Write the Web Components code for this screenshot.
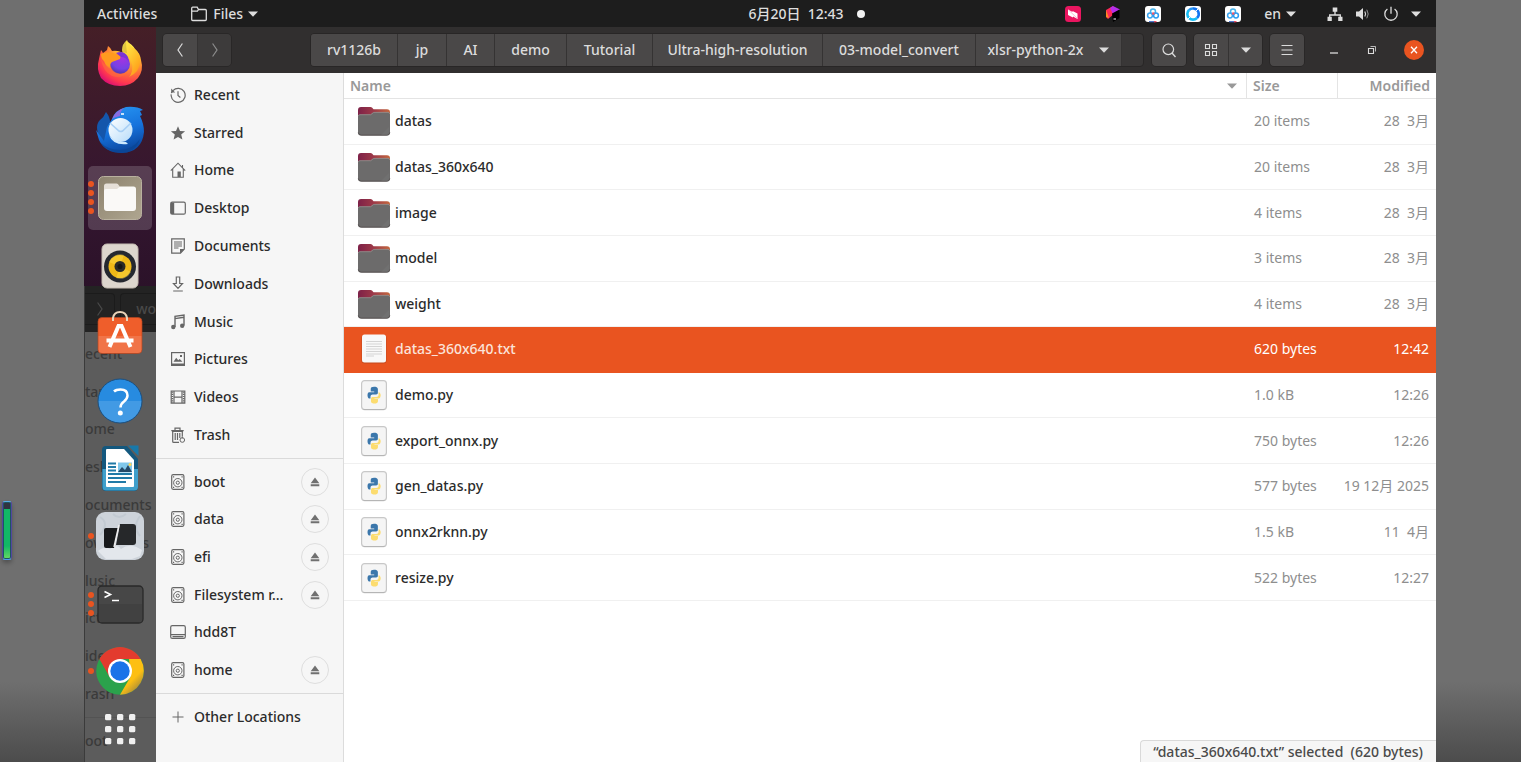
<!DOCTYPE html>
<html lang="en">
<head>
<meta charset="utf-8">
<title>Files</title>
<style>
html, body { margin: 0; height: 100%; }
body {
  font: 500 14px/20px "Noto Sans", "Noto Sans CJK SC", sans-serif;
  overflow: hidden;
}
</style>
</head>
<body>
<desk-screen>
  <top-bar></top-bar>
  <app-dock></app-dock>
  <files-window></files-window>
</desk-screen>

<script>
const define = (name, html, setup) => {
  const tpl = document.createElement('template');
  tpl.innerHTML = html;
  customElements.define(name, class extends HTMLElement {
    connectedCallback() {
      if (this.shadowRoot) return;
      const root = this.attachShadow({ mode: 'open' });
      root.append(tpl.content.cloneNode(true));
      if (setup) setup(this, root);
    }
  });
};

/* ---------- symbolic and full-colour icons ---------- */
const S = 'fill="none" stroke="currentColor"';
const ICONS = {
  recent: [16, 16, `<path ${S} stroke-width="1.2" d="M3 3.6A7 7 0 1 1 1.2 9"/><path ${S} stroke-width="1.2" stroke-dasharray="1.6 1.2" d="M1.2 9A7 7 0 0 1 3 3.4"/><path d="M1.2 1.6v4h4z" fill="currentColor"/><path ${S} stroke-width="1.2" d="M8 4.2v4.3l2.4 2"/>`],
  star: [16, 16, `<path fill="currentColor" d="M8 1.2l2 4.7 5.1.4-3.9 3.3 1.2 5L8 12l-4.4 2.6 1.2-5L.9 6.300l5.1-.4z"/>`],
  home: [16, 16, `<path ${S} stroke-width="1.1" d="M.8 8.600 8 1.200l7.200 7.400M2.700 7v8.300h10.600V7M12.500 3v2.500"/><path fill="currentColor" d="M7.500 9.500h3.300v5.500H7.500z"/>`],
  desktop: [16, 16, `<rect ${S} x=".7" y="2.200" width="14.600" height="12" rx="1.500" stroke-width="1.200"/><path fill="currentColor" d="M1 2.500h3.200v11.500H1z"/>`],
  documents: [16, 16, `<path ${S} stroke-width="1.200" d="M1.700.8h12.600v10.200L10.500 15.200H1.700z"/><path ${S} d="M4 4h8M4 6h8M4 8h8M4 10h4.500"/><path fill="currentColor" d="M10 11h4.500L10 15.500z"/>`],
  downloads: [16, 16, `<path ${S} stroke-width="1.200" d="M6.300 1h3.400v6.500h2.800L8 12.300 3.500 7.500h2.800zM3.200 15h9.600"/>`],
  music: [16, 16, `<path ${S} stroke-width="1.400" d="M5 13V2.400L14 1v10.500M5 4.600 14 3.200"/><circle cx="3.300" cy="13" r="2.200" fill="currentColor"/><circle cx="12.200" cy="11.700" r="2.200" fill="currentColor"/>`],
  pictures: [16, 16, `<rect ${S} x="1.600" y="1.600" width="12.800" height="12.800" stroke-width="1.200"/><path fill="currentColor" d="M1.600 12.500h12.800v2H1.600zM3.500 10.800l2.700-4 2 2.500L9.700 8l2.800 2.800zM10 4h2v2h-2z"/>`],
  videos: [16, 16, `<path ${S} stroke-width="1.200" d="M1.200 2h13.600v12.200H1.200zM4 2v12.200M12 2v12.200M4 8.100h8"/><path ${S} stroke-width="1.600" stroke-dasharray="1.200 1" d="M2.300 2.500v11.500M13.700 2.500v11.500"/>`],
  trash: [16, 16, `<path ${S} stroke-width="1.200" d="M1.300 3.600h12.400M5 3.500V1.200h5v2.300M2.700 4v10.400q0 1 1 1H9M12.300 4v5.500M5.200 6v7M7.500 6v7M9.800 6v5"/><path fill="currentColor" d="M2 3h11v2H2z"/><circle ${S} cx="12.300" cy="13" r="2.300"/><path ${S} d="M12.300 9.500v2"/>`],
  drive: [16, 16, `<rect ${S} x="1.700" y=".7" width="12.200" height="14.600" rx="1.500" stroke-width="1.200"/><circle ${S} cx="7.800" cy="8.700" r="4.200"/><circle ${S} cx="7.800" cy="8.700" r="1.600"/><path fill="currentColor" d="M3 2.300h1.200v1.200H3zM11.500 2.300h1.200v1.200h-1.200zM3 12.700h1.200v1.200H3zM11.500 12.700h1.200v1.200h-1.200z"/>`],
  disk: [16, 16, `<rect ${S} x=".7" y="1.700" width="14.600" height="12.600" rx="1.600" stroke-width="1.200"/><path ${S} stroke-width="1.200" d="M1 10.700h14M2.500 12.600h11"/>`],
  plus: [16, 16, `<path ${S} d="M8 2.500v11M2.500 8h11"/>`],
  eject: [10, 10, `<path fill="currentColor" d="M5 .5 9.300 6.200H.7zM.7 7.300h8.600v2H.7z"/>`],
  caret: [10, 6, `<path fill="currentColor" d="M0 .5h10L5 5.700z"/>`],
  back: [8, 16, `<path ${S} stroke-width="1.200" d="M6.400 1.500 2 8l4.400 6.500"/>`],
  forward: [8, 16, `<path ${S} stroke-width="1.200" d="M1.600 1.500 6 8l-4.400 6.500"/>`],
  search: [16, 16, `<circle ${S} cx="7.300" cy="7.300" r="5.300" stroke-width="1.200"/><path ${S} stroke-width="1.400" d="m11 11 3.500 4"/>`],
  grid: [14, 14, `<path ${S} stroke-width="1.100" d="M1.500 1.500h4v4h-4zM8.500 1.500h4v4h-4zM1.500 8.500h4v4h-4zM8.500 8.500h4v4h-4z"/>`],
  menu: [12, 12, `<path ${S} stroke-width="1.200" d="M.5 1.500h11M.5 6h11M.5 10.500h11"/>`],
  minimize: [10, 10, `<path ${S} stroke-width="1.300" d="M1 8h8"/>`],
  restore: [10, 10, `<path ${S} stroke-width="1.100" d="M1.500 3.500h5v5h-5z"/><path ${S} opacity=".8" d="M3.500 1.500h5v5"/>`],
  close: [8, 8, `<path ${S} stroke-width="1.300" d="m1 .8 6 6.400M7 .8 1 7.200"/>`],
  folderline: [18, 16, `<path ${S} stroke-width="1.300" d="M1.700 3V2.200q0-1 1-1h4.500l1.300 2.300h6.800q1 0 1 1v9q0 1-1 1H2.700q-1 0-1-1zM1.700 5.200h5.700l1.200-1.700"/>`],
  network: [16, 16, `<path ${S} stroke-width="1.300" d="M8 5v4M2.700 12V9h10.600v3"/><path fill="currentColor" d="M5.700 1.500h4.600v4.300H5.700zM.5 10.800h4.300v4.200H.5zM11.200 10.800h4.300v4.200h-4.300z"/>`],
  volume: [16, 16, `<path fill="currentColor" d="M1 5.500h3L8 2v12l-4-3.500H1z"/><path ${S} stroke-width="1.200" d="M9.800 5.500q1.600 2.500 0 5"/><path ${S} opacity=".6" d="M11.800 3.700q2.800 4.300 0 8.600"/>`],
  power: [16, 16, `<path ${S} stroke-width="1.300" d="M4.400 3A6.200 6.200 0 1 0 11.600 3M8 .8v7"/>`],
  anydesk: [18, 18, `<rect x="1" y="1" width="16" height="16" rx="3.500" fill="#ea1660"/><path fill="#fff" d="M4 4.500 8.500 7V6l5 2.500V14L9 11.500v1L4 10z"/><path d="m4.500 5 9 8.500" stroke="#f7a9c5" stroke-width=".8"/>`],
  toolbox: [18, 18, `<path fill="#fe2857" d="M2 5 9 1l1 8-6 5-2-2z"/><path fill="#fd8a22" d="m2 5 3 8-3-1z"/><path fill="#b62dea" d="m9 1 7 3.500L9 9 6 3z"/><path fill="#000" d="M8 8.500 15.500 4.500v8.500L9 17z"/><path fill="#fff" d="M9.500 13.500h2.500v1H9.500z"/>`],
  clips: [18, 18, `<rect x="1" y="1" width="16" height="16" rx="3" fill="#fff"/><g fill="none" stroke-width="1.500"><circle cx="9" cy="6.400" r="2.500" stroke="#45b3ec"/><circle cx="6" cy="10.500" r="2.400" stroke="#3ba6f2"/><circle cx="12" cy="10.500" r="2.400" stroke="#2b9bf2"/></g><circle cx="9.200" cy="8.500" r="1.300" fill="#f0566b"/><path stroke="#3b66c4" stroke-width="1.200" d="M5 16.700h6"/><path stroke="#ef4056" stroke-width="1.200" d="M10 16.700h2.500"/>`],
  ring: [18, 18, `<rect x="1" y="1" width="16" height="16" rx="3" fill="#fff"/><g fill="none" stroke-width="2.600"><path stroke="#1274f2" d="M9 3.500a5.500 5.500 0 0 1 4 9.500"/><path stroke="#16bdf5" d="M13 13a5.500 5.500 0 0 1-8-8"/><path stroke="#2596f6" d="M5 5.200a5.500 5.500 0 0 1 4-1.700"/></g><path d="m3 15 3-3M12 6l3-3" stroke="#fff"/>`],
  folder: [34, 32, `<defs><linearGradient id="a"><stop offset="0" stop-color="#7d2148"/><stop offset=".5" stop-color="#9e3a48"/><stop offset="1" stop-color="#c4693f"/></linearGradient></defs><path fill="url(#a)" d="M1 5q0-3 3-3h9.500q1.500 0 3 2.200H30q3 0 3 3V15H1z"/><path d="M1 11q0-1.500 2-1.500h10.500l3-2.300H31q2 0 2 2v18.300q0 3-3 3H4q-3 0-3-3z" fill="#6c6b6b"/><path d="M1.300 10.800Q1.500 9.700 3 9.700h10.700l3-2.300H31q1.500 0 1.700 1.500" fill="none" stroke="#97908f" stroke-width=".8"/><path d="M1.300 27.500q.2 2.700 3 2.700h25.500q2.700 0 3-2.700" fill="none" stroke="#4c4747" stroke-width=".8"/><path d="m32 22-8 8h6q2 0 2-2z" fill="#777" opacity=".4"/>`],
  text: [34, 32, `<rect x="4.500" y="2" width="25" height="28.500" rx="3" fill="#b4441c" opacity=".7"/><rect x="5" y="1.500" width="24" height="28" rx="2.500" fill="#f8f8f8"/><path d="M9 8.500h8M9 11h8M9 13.500h8M9 16h8M9 18.500h8M9 21h8M9 23h8M17 8.500h8M17 11h8M17 13.500h8M17 16h8M17 18.500h8M17 21h8" stroke="#d4d4d4"/>`],
  python: [34, 32, `<rect x="4.600" y="1.600" width="24.800" height="29" rx="3" fill="#f5f5f5" stroke="#c8c8c8" stroke-width="1.200"/><path d="M6.500 30.500h21" stroke="#b5b5b5"/><g transform="translate(3.300 2) scale(.87)"><path fill="#3b77ab" d="M15.800 6.500c-2.700 0-3.800 1-3.800 2.600v3h4v.7h-5.700C8.600 12.800 8.300 15 8.300 16.500s.5 3.700 2 3.700h1.400V18c0-1.600 1.300-2.400 2.500-2.400h4c1.300 0 2-1 2-2V9.100c0-2-2-2.600-4.400-2.600z"/><path fill="#fcdc6f" d="M21 12.800v3c0 1.700-1.200 2.600-2.500 2.600h-4c-1.300 0-2.200.8-2.200 2v3.200c0 1.600 2 2.400 4 2.400 2.300 0 4-.8 4-2.600v-2.600h-4v-.6H21c1.500 0 2.400-1.600 2.400-3.700S22.500 12.800 21 12.800z"/></g>`],
  firefox: [48, 48, `<defs><radialGradient id="a" cx=".75" cy=".12" r="1"><stop offset="0" stop-color="#fff44f"/><stop offset=".35" stop-color="#ffb52e"/><stop offset=".6" stop-color="#ff7139"/><stop offset=".82" stop-color="#ff3750"/><stop offset="1" stop-color="#d60a78"/></radialGradient><radialGradient id="b" cx=".6" cy=".2" r=".9"><stop offset="0" stop-color="#a832e0"/><stop offset=".6" stop-color="#7542e5"/><stop offset="1" stop-color="#4a3099"/></radialGradient><linearGradient id="c" y2="1"><stop offset="0" stop-color="#fff44f"/><stop offset="1" stop-color="#ff980e"/></linearGradient></defs><path fill="url(#a)" d="M5 11q1 1 2 3l4-3 1-4q3 2 4 5 4-1 9 1l6 1q-1-7-1-12 6 3 9 8 5 4 6 11 3 10-3 18-7 8-18 8-12 0-19-8-5-9-2-19 1-5 2-9z"/><path fill="url(#c)" d="M31 1q-5 4-5 10 0 3 4 5 8 6 6 16-1 4-3 6 11-5 11-16 0-7-5-12-6-4-8-9z" opacity=".85"/><circle cx="24" cy="25" r="10" fill="url(#b)"/><path fill="#ff9a1f" d="M5 15q5-3 12-1l8 2-1 4-8 3q-3 2-1 7-5-2-7-8-3-2-3-7z"/><path fill="#ff7139" d="M5 20q4 8 10 8 4 9 16 6-6 6-15 3Q7 33 5 20z" opacity=".5"/><path fill="#7b35d5" d="M20 14q8-3 12 4l1 5q-3-5-8-5z"/>`],
  thunderbird: [48, 48, `<defs><linearGradient id="a" x2=".3" y2="1"><stop offset="0" stop-color="#299af5"/><stop offset=".6" stop-color="#1672dc"/><stop offset="1" stop-color="#0b4ba5"/></linearGradient><linearGradient id="b" y2="1"><stop offset="0" stop-color="#fff"/><stop offset="1" stop-color="#b7dcfa"/></linearGradient></defs><path fill="#1456ab" d="M10 6q4 5 4 10l-3 22-7-6Q-2 20 4 14q4-3 6-8z"/><path fill="url(#a)" d="M16 13q3-9 14-12 11-1 17 3l-3 1 2 4-2 1q4 8 4 16-2 20-22 21Q9 47 3 34L0 24l8 11 3-14z"/><path fill="#8a6be0" d="M16 13q3-8 12-11-4 3-4 8-5 1-8 3z"/><path fill="#0a438d" opacity=".6" d="M4 36q8 8 20 8t20-11Q39 47 26 47 11 47 4 36z"/><circle cx="24.500" cy="24" r="12" fill="url(#b)"/><path d="m14 17 9 8q2 1 3.500 0l8.500-8" fill="none" stroke="#a7cff5" stroke-width="1.600"/><path fill="#cce9ff" d="M13 29q7 8 17 7l2 2Q17 40 13 29z"/><path d="M25 8h3" stroke="#fff" stroke-width="1.500"/>`],
  files: [48, 48, `<defs><linearGradient id="a" x2="1" y2="1"><stop offset="0" stop-color="#8c826e"/><stop offset="1" stop-color="#afa690"/></linearGradient></defs><rect x="2.500" y="2.500" width="43" height="43" rx="5" fill="url(#a)" stroke="#b9b19f"/><path fill="#e6e0d8" d="M8 12q0-2.500 2.500-2.500h10q1.500 0 2.500 2l1 1.500h6V20H8z"/><path fill="#faf9f7" d="M8 17q0-2 2-2h11l3-2.500h13.500q2.500 0 2.500 2.500v19q0 3-3 3H11q-3 0-3-3z"/>`],
  rhythm: [48, 48, `<rect x="6" y="2" width="36" height="44" rx="5" fill="#ddd6ce" stroke="#c5bcb2"/><circle cx="24" cy="24.500" r="16" fill="#252830"/><circle cx="24" cy="24.500" r="11.500" fill="#efb817"/><path d="M24 24.500 13 20a12 12 0 0 1 15-7zM24 24.500 35 30a12 12 0 0 1-15 6z" fill="#ffdc4a" opacity=".45"/><circle cx="24" cy="24.500" r="5.500" fill="#2a2a27"/><circle cx="24" cy="24.500" r="2.500" fill="#151515"/>`],
  software: [48, 48, `<rect x="2" y="8.500" width="44" height="36" rx="4" fill="#ef5e2b" stroke="#b34521" stroke-width=".7"/><path fill="#fff" opacity=".14" d="M2.500 27h43v14q0 3-3.500 3H6q-3.500 0-3.500-3z"/><path d="M17 12V9q1-6 7-6t7 6v3" fill="none" stroke="#e9d3b9" stroke-width="2"/><path d="M13.500 38 22.500 17h3l9 21M10.500 31.500h27" fill="none" stroke="#fff" stroke-width="4"/>`],
  help: [48, 48, `<circle cx="24" cy="24" r="22" fill="#278be0" stroke="#1a4f80"/><path fill="#fff" opacity=".13" d="M2.500 24h43a21.500 21.500 0 0 1-43 0z"/><path d="M18 14.500q2-2 6.500-2 7 0 7 6 0 3-3.500 6-3.500 2.500-3.500 6" fill="none" stroke="#fff" stroke-width="2.500"/><circle cx="24.300" cy="36" r="2.500" fill="#fff"/>`],
  writer: [48, 48, `<path d="M10 2h21l11 13v28q0 4-4 4H10q-4 0-4-4V6q0-4 4-4z" fill="#14587e"/><path d="M6.500 25H42v18q0 3.500-4 3.500H10q-3.500 0-3.500-3.500z" fill="#3f9fcb"/><path d="M32 1.500h10.500V12z" fill="#1878a9"/><path d="M11 5h17l10 11v26q0 1-1 1H11q-1 0-1-1V6q0-1 1-1z" fill="#fff"/><path d="M12 19.500h8M12 23h8M12 26.500h8M12 30h24M12 34h24M12 38h18" stroke="#217aa7" stroke-width="1.800"/><path fill="#80c7ea" d="M22 18.500h14v10H22z"/><path fill="#254967" d="m22 28 4-5 3 3 3-5 4 7z"/><circle cx="34" cy="20.500" r="1.500" fill="#ffd451"/>`],
  deskflow: [48, 48, `<rect x="0" y="0" width="48" height="48" rx="9" fill="#cdd3da"/><path d="M2 39q7-6 12-2 7-6 11 0 9-7 21 1l-2 6-8 3H10z" fill="#e3e7ec"/><path d="M4 5q10 6 0 18M44 4q-8 11 0 20M17 2q6 6 13 0" fill="none" stroke="#c2cad2" stroke-width="2"/><path fill="#181a1c" d="M10 16h12l-4 20h-8q-2 0-2-2V18q0-2 2-2z"/><path fill="#26282a" d="M24 12h13q3 0 3 3v15q0 3-3 3H20z"/><path d="m23 13-5 22" stroke="#eee" stroke-width="1.500"/>`],
  terminal: [48, 48, `<rect x="2" y="6" width="45" height="37" rx="4" fill="#474747" stroke="#292929" stroke-width="1.300"/><path fill="#414141" d="M3 24h43v15q0 3-3 3H6q-3 0-3-3z"/><path d="m8.500 11.500 6 3-6 3M16 20.500h7" fill="none" stroke="#fff" stroke-width="1.600"/>`],
  chrome: [48, 48, `<defs><linearGradient id="f" y2="1"><stop offset=".72" stop-color="#5c5c5c" stop-opacity="0"/><stop offset="1" stop-color="#5c5c5c" stop-opacity=".9"/></linearGradient></defs><circle cx="24" cy="24" r="23.800" fill="#2ba24c"/><path fill="#e33b2e" d="M3.400 12a23.800 23.800 0 0 1 41.200 0H24L13.600 30z"/><path fill="#fdbf13" d="M44.600 12A23.800 23.800 0 0 1 24 47.800L34.400 30 33 12z"/><circle cx="24" cy="24" r="12" fill="#fff"/><circle cx="24" cy="24" r="9.700" fill="#1a73e8"/><circle cx="24" cy="24" r="24" fill="url(#f)"/>`],
  apps: [32, 32, `<g fill="#f0f0f0"><rect x="1" y="1" width="6.300" height="6.300" rx="1.500"/><rect x="13" y="1" width="6.300" height="6.300" rx="1.500"/><rect x="25" y="1" width="6.300" height="6.300" rx="1.500"/><rect x="1" y="13" width="6.300" height="6.300" rx="1.500"/><rect x="13" y="13" width="6.300" height="6.300" rx="1.500"/><rect x="25" y="13" width="6.300" height="6.300" rx="1.500"/><rect x="1" y="25" width="6.300" height="6.300" rx="1.500"/><rect x="13" y="25" width="6.300" height="6.300" rx="1.500"/><rect x="25" y="25" width="6.300" height="6.300" rx="1.500"/></g>`]
};

define('ui-icon', `<style>:host{display:inline-flex;flex:none}svg{display:block}</style>`, (el, root) => {
  const [w, h, body] = ICONS[el.getAttribute('name')];
  const box = document.createElement('div');
  box.innerHTML = `<svg xmlns="http://www.w3.org/2000/svg" width="${w}" height="${h}" viewBox="0 0 ${w} ${h}" aria-hidden="true">${body}</svg>`;
  root.append(box.firstChild);
});

/* ---------- screen: side bezels, panel, dock and window ---------- */
define('desk-screen', `
<style>
:host {
  display: grid; position: relative; box-sizing: border-box; height: 100vh;
  grid-template: 27px minmax(0, 1fr) / 72px minmax(0, 1fr);
  padding: 0 85px 0 84px; overflow: hidden;
  background: linear-gradient(#6f6f6f calc(100% - 80px), #4c4c4c);
}
::slotted(top-bar) { grid-column: 1 / 3; }
.meter {
  position: absolute; left: 2px; top: 501px; box-sizing: border-box; width: 10px; height: 59px;
  border: 1px solid #5148a0; border-top-color: #58aee8; border-bottom-color: #4b9bea;
  border-radius: 3px; background: linear-gradient(#303440 7px, #12b866 7px 44px, #68db62);
  box-shadow: 0 3px 4px #0004, inset 0 0 0 1px #1e555f;
}
</style>
<slot></slot><div class="meter"></div>`);

define('top-bar', `
<style>
:host { display: grid; grid-template-columns: 49% auto 1fr; align-items: center; background: #1d1d1d; color: #dedede; }
div { display: flex; align-items: center; }
button { all: unset; display: flex; align-items: center; }
.left { padding-left: 13px; gap: 33px; }
.files { gap: 5px; }
.clock { gap: 13px; padding-left: 2px; white-space: pre; padding-top: 1px; }
.dot { width: 8px; height: 8px; border-radius: 50%; background: #f2f2f2; }
.right { justify-content: flex-end; padding-right: 15px; }
.tray { gap: 22px; margin-right: 22px; }
.lang { gap: 5px; margin-right: 31px; }
.system { gap: 12px; }
</style>
<div class="left"><button>Activities</button><button class="files"><ui-icon name="folderline"></ui-icon>Files <ui-icon name="caret"></ui-icon></button></div>
<button class="clock"><span>6月20日  12:43</span><span class="dot"></span></button>
<div class="right">
  <div class="tray"><ui-icon name="anydesk"></ui-icon><ui-icon name="toolbox"></ui-icon><ui-icon name="clips"></ui-icon><ui-icon name="ring"></ui-icon><ui-icon name="clips"></ui-icon></div>
  <button class="lang">en <ui-icon name="caret"></ui-icon></button>
  <button class="system" aria-label="System menu"><ui-icon name="network"></ui-icon><ui-icon name="volume"></ui-icon><ui-icon name="power"></ui-icon><ui-icon name="caret"></ui-icon></button>
</div>`);

/* ---------- dock ---------- */
define('dock-item', `
<style>
:host { display: grid; place-items: center; position: relative; }
button { all: unset; display: grid; place-items: center; width: 64px; height: 64px; border-radius: 5px; }
:host([active]) button { background: #ffffff2b; }
.dots { position: absolute; left: 4px; top: 0; bottom: 0; display: flex; flex-direction: column; justify-content: center; gap: 3px; }
.dots i { width: 6px; height: 6px; border-radius: 50%; background: #e95420; }
</style>
<button><slot></slot></button><div class="dots"></div>`, (el, root) => {
  root.querySelector('button').setAttribute('aria-label', el.getAttribute('label'));
  root.querySelector('.dots').innerHTML = '<i></i>'.repeat(+el.getAttribute('windows') || 0);
});

const PLACES = [['recent', 'Recent'], ['star', 'Starred'], ['home', 'Home'], ['desktop', 'Desktop'], ['documents', 'Documents'], ['downloads', 'Downloads'], ['music', 'Music'], ['pictures', 'Pictures'], ['videos', 'Videos'], ['trash', 'Trash']];

define('app-dock', `
<style>
:host { display: flex; flex-direction: column; position: relative; overflow: hidden; background: linear-gradient(#451f27, #351630 160px, #2b1229 260px); }
.behind { position: absolute; inset: 259px 0 0; border-left: 1px solid #3b3b3b; background: #5c5c5c; color: #3a3a3a; }
.bar { height: 46px; display: flex; align-items: center; background: #232323; color: #494949; }
.bar span { flex: none; box-sizing: border-box; height: 32px; display: flex; align-items: center; border: 1px solid #1b1b1b; }
.bar .fwd { width: 30px; justify-content: center; border-left: 0; border-radius: 0 4px 4px 0; }
.bar .path { flex: 1; margin-left: 5px; justify-content: flex-end; border-right: 0; border-radius: 4px 0 0 4px; }
ul { list-style: none; margin: 0; padding: 3px 0 4px; height: 378px; display: grid; grid-auto-rows: 1fr; align-items: center; border-bottom: 1px solid #535353; }
li { white-space: nowrap; }
.last { height: 38px; margin-top: 4px; line-height: 38px; }
.items { position: relative; display: grid; grid-auto-rows: 1fr; height: 676px; padding-top: 2px; flex: none; }
.apps { all: unset; position: relative; display: grid; place-items: center; height: 48px; }
</style>
<div class="behind">
  <div class="bar"><span class="fwd"><ui-icon name="forward"></ui-icon></span><span class="path">wo</span></div>
  <ul><li>ecent</li><li>tarred</li><li>ome</li><li>esktop</li><li>ocuments</li><li>ownloads</li><li>lusic</li><li>ictures</li><li>ideos</li><li>rash</li></ul>
  <div class="last">oot</div>
</div>
<div class="items">
  <dock-item label="Firefox"><ui-icon name="firefox"></ui-icon></dock-item>
  <dock-item label="Thunderbird"><ui-icon name="thunderbird"></ui-icon></dock-item>
  <dock-item label="Files" active windows="4"><ui-icon name="files"></ui-icon></dock-item>
  <dock-item label="Rhythmbox"><ui-icon name="rhythm"></ui-icon></dock-item>
  <dock-item label="Ubuntu Software"><ui-icon name="software"></ui-icon></dock-item>
  <dock-item label="Help"><ui-icon name="help"></ui-icon></dock-item>
  <dock-item label="LibreOffice Writer"><ui-icon name="writer"></ui-icon></dock-item>
  <dock-item label="Deskflow" windows="1"><ui-icon name="deskflow"></ui-icon></dock-item>
  <dock-item label="Terminal" windows="3"><ui-icon name="terminal"></ui-icon></dock-item>
  <dock-item label="Chrome" windows="1"><ui-icon name="chrome"></ui-icon></dock-item>
</div>
<button class="apps" aria-label="Show applications"><ui-icon name="apps"></ui-icon></button>`);

/* ---------- file manager window ---------- */
define('files-window', `
<style>
:host { display: grid; grid-template: 46px minmax(0, 1fr) / 188px minmax(0, 1fr); background: #fff; position: relative; }
header-bar { grid-column: 1 / 3; }
output { position: absolute; right: 0; bottom: 0; box-sizing: border-box; height: 22px; padding: 0 13px 0 12px; border: 1px solid #d9d9d9; border-width: 1px 0 0 1px; border-radius: 4px 0 0; background: #f6f6f6; color: #4a4a4a; line-height: 22px; white-space: pre; }
</style>
<header-bar></header-bar><side-bar></side-bar><file-list></file-list>
<output>“datas_360x640.txt” selected  (620 bytes)</output>`);

define('header-bar', `
<style>
:host { display: flex; align-items: center; padding: 0 12px 0 6px; background: #312f2f; color: #dcdcdc; box-sizing: border-box; }
button { all: unset; box-sizing: border-box; display: flex; align-items: center; justify-content: center; height: 32px; background: #4a4848; white-space: nowrap; }
.group { display: flex; border: 1px solid #292727; border-radius: 5px; overflow: hidden; height: 32px; flex: none; }
.group button { width: 34px; }
.group button + button { border-left: 1px solid #353333; }
.group .off { background: #3d3b3b; color: #8c8c8c; }
nav { flex: 1; min-width: 0; margin: 0 7px 0 78px; display: grid; grid-template-columns: 87px 49px 48px 72px 86px 170px 153px 146px 1fr; border: 1px solid #282626; border-radius: 4px; background: #393737; overflow: hidden; }
nav button { border-right: 1px solid #353333; gap: 16px; }
.search, .view { margin-right: 6px; }
.controls { flex: none; width: 95px; display: flex; justify-content: space-between; align-items: center; margin-left: 24px; }
.controls button { background: none; width: 10px; }
.controls .close { width: 20px; height: 20px; border-radius: 50%; background: #e95420; color: #fff; }
</style>
<div class="group"><button aria-label="Back"><ui-icon name="back"></ui-icon></button><button class="off" aria-label="Forward"><ui-icon name="forward"></ui-icon></button></div>
<nav><button>rv1126b</button><button>jp</button><button>AI</button><button>demo</button><button>Tutorial</button><button>Ultra-high-resolution</button><button>03-model_convert</button><button>xlsr-python-2x <ui-icon name="caret"></ui-icon></button></nav>
<div class="group search"><button aria-label="Search"><ui-icon name="search"></ui-icon></button></div>
<div class="group view"><button aria-label="Icon view"><ui-icon name="grid"></ui-icon></button><button aria-label="View options"><ui-icon name="caret"></ui-icon></button></div>
<div class="group"><button aria-label="Menu"><ui-icon name="menu"></ui-icon></button></div>
<div class="controls"><button aria-label="Minimize"><ui-icon name="minimize"></ui-icon></button><button aria-label="Restore"><ui-icon name="restore"></ui-icon></button><button class="close" aria-label="Close"><ui-icon name="close"></ui-icon></button></div>`);

define('side-item', `
<style>
:host { display: flex; align-items: center; padding: 0 14px; }
a { flex: 1; min-width: 0; display: flex; align-items: center; gap: 8px; color: inherit; text-decoration: none; }
ui-icon { color: #666; }
span { flex: none; white-space: nowrap; }
button { all: unset; box-sizing: border-box; width: 28px; height: 28px; flex: none; display: grid; place-items: center; border: 1px solid #dedede; border-radius: 50%; }
button ui-icon { color: #707070; }
</style>
<a href="#"><span><slot></slot></span></a>`, (el, root) => {
  const icon = document.createElement('ui-icon');
  icon.setAttribute('name', el.getAttribute('icon'));
  root.querySelector('a').prepend(icon);
  if (el.hasAttribute('eject')) {
    root.querySelector('a').insertAdjacentHTML('afterend', '<button aria-label="Eject"><ui-icon name="eject"></ui-icon></button>');
  }
});

define('side-bar', `
<style>
:host { display: block; background: #f6f6f6; border-right: 1px solid #dcdcdc; color: #2b2b2b; padding-top: 3px; overflow: hidden; }
div { display: grid; grid-auto-rows: 1fr; }
.places { height: 378px; }
.drives { height: 226px; }
hr { margin: 4px 0; border: 0; border-top: 1px solid #dadada; }
.other { height: 38px; }
</style>
<div class="places"></div><hr>
<div class="drives">
  <side-item icon="drive" eject>boot</side-item><side-item icon="drive" eject>data</side-item><side-item icon="drive" eject>efi</side-item><side-item icon="drive" eject>Filesystem r…</side-item><side-item icon="disk">hdd8T</side-item><side-item icon="drive" eject>home</side-item>
</div><hr>
<div class="other"><side-item icon="plus">Other Locations</side-item></div>`, (el, root) => {
  root.querySelector('.places').innerHTML = PLACES.map(([i, t]) => `<side-item icon="${i}">${t}</side-item>`).join('');
});

const FILES = [
  ['folder', 'datas', '20 items', '28  3月'],
  ['folder', 'datas_360x640', '20 items', '28  3月'],
  ['folder', 'image', '4 items', '28  3月'],
  ['folder', 'model', '3 items', '28  3月'],
  ['folder', 'weight', '4 items', '28  3月'],
  ['text', 'datas_360x640.txt', '620 bytes', '12:42', true],
  ['python', 'demo.py', '1.0 kB', '12:26'],
  ['python', 'export_onnx.py', '750 bytes', '12:26'],
  ['python', 'gen_datas.py', '577 bytes', '19 12月 2025'],
  ['python', 'onnx2rknn.py', '1.5 kB', '11  4月'],
  ['python', 'resize.py', '522 bytes', '12:27']
];

define('file-list', `
<style>
:host { display: block; color: #2b2b2b; }
table { width: 100%; height: 528px; border-collapse: separate; border-spacing: 0; table-layout: fixed; }
th, td { padding: 0; border-bottom: 1px solid #f0f0f0; box-sizing: border-box; white-space: pre; text-align: left; }
th { height: 26px; padding: 0 6px; color: #999; border-bottom-color: #e4e4e4; font-weight: 600; }
th + th { border-left: 1px solid #e4e4e4; }
th div { display: flex; align-items: center; justify-content: space-between; padding-right: 3px; }
.size { width: 91px; }
.date { width: 99px; text-align: right; }
td { color: #8e8e8e; font-weight: 400; }
td.size { padding-left: 8px; }
td.date { padding-right: 7px; }
td.name { color: #2b2b2b; font-weight: 500; }
td.name div { display: flex; align-items: center; gap: 4px; padding-left: 13px; }
.selected td, .selected td.name { background: #e95420; border-color: #e95420; color: #fff; }
.selected td.name { color: #fbe3da; }
</style>
<table><thead><tr><th><div>Name<ui-icon name="caret"></ui-icon></div></th><th class="size">Size</th><th class="date">Modified</th></tr></thead><tbody></tbody></table>`, (el, root) => {
  root.querySelector('tbody').innerHTML = FILES.map(([icon, name, size, date, sel]) =>
    `<tr${sel ? ' class="selected"' : ''}><td class="name"><div><ui-icon name="${icon}"></ui-icon><span>${name}</span></div></td><td class="size">${size}</td><td class="date">${date}</td></tr>`).join('');
});
</script>
</body>
</html>
